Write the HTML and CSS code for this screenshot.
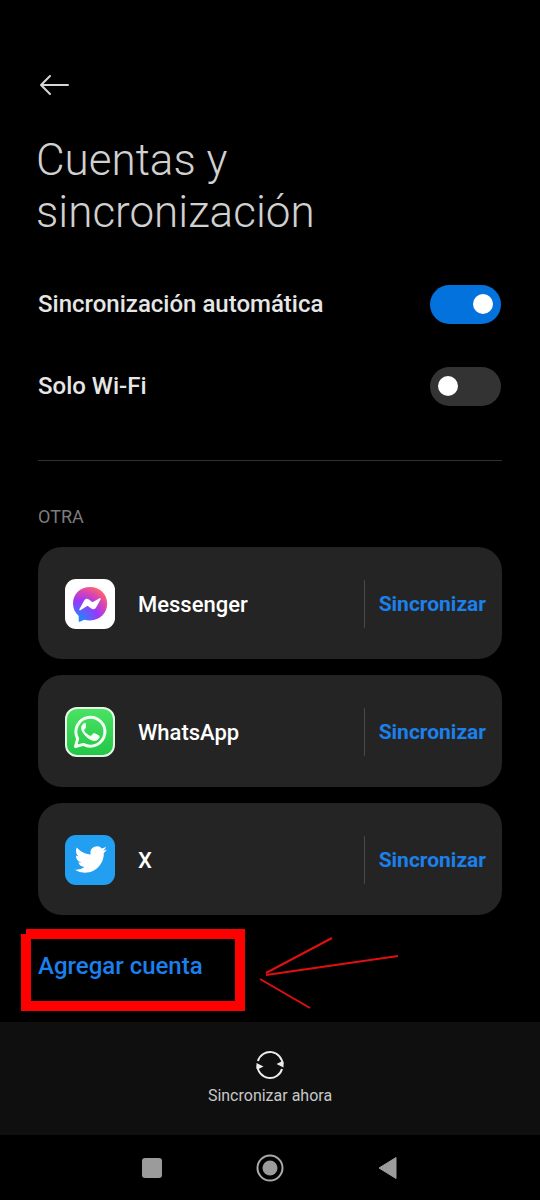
FILE: index.html
```html
<!DOCTYPE html>
<html lang="es">
<head>
<meta charset="utf-8">
<meta name="viewport" content="width=device-width, initial-scale=1">
<title>Cuentas y sincronización</title>
<link rel="stylesheet" href="styles.css">
</head>
<body>
<div class="screen">
  <header class="header">
    <button class="back" type="button" aria-label="Atrás">
      <svg width="32" height="24" viewBox="0 0 32 24" fill="none" stroke="#d6d6d6" stroke-width="2" stroke-linecap="round" stroke-linejoin="round"><path d="M30 12H3M12 3L3 12l9 9"/></svg>
    </button>
    <h1 class="title">Cuentas y sincronización</h1>
  </header>
  <main class="content">
    <section class="settings">
      <div class="setting">
        <label for="auto">Sincronización automática</label>
        <input class="switch" id="auto" type="checkbox" role="switch" checked>
      </div>
      <div class="setting">
        <label for="wifi">Solo Wi-Fi</label>
        <input class="switch" id="wifi" type="checkbox" role="switch">
      </div>
    </section>
    <section class="accounts">
      <h2 class="group">OTRA</h2>
      <ul class="list">
        <li class="card">
          <svg class="logo" viewBox="0 0 50 50" aria-hidden="true">
            <defs><radialGradient id="msg" cx="0.15" cy="1" r="1.1"><stop offset="0" stop-color="#0a95ff"/><stop offset="0.55" stop-color="#9a37f8"/><stop offset="0.8" stop-color="#d745b4"/><stop offset="1" stop-color="#ff6270"/></radialGradient></defs>
            <rect width="50" height="50" rx="11" fill="#fff"/>
            <path fill="url(#msg)" d="M25 8C15 8 8 15.200 8 24.600c0 5.100 2.100 9.300 5.700 12.300V42c0 .8.600 1 1.200.8l4.300-2.100c1.800.5 3.800.7 5.800.7 10 0 17.200-7.200 17.200-16.800C42.200 15.200 35 8 25 8z"/>
            <path fill="#fff" stroke="#fff" stroke-width="1.500" stroke-linejoin="round" d="M15 30.500l5-8.800c.8-1.200 2.200-1.500 3.400-.7l4 3.100 7.600-4.300-4.700 8.500c-.8 1.300-2.400 1.600-3.600.7l-4.200-3.200z"/>
          </svg>
          <span class="name">Messenger</span>
          <button class="sync" type="button">Sincronizar</button>
        </li>
        <li class="card">
          <svg class="logo" viewBox="0 0 50 50" aria-hidden="true">
            <defs><linearGradient id="wa" x2="0" y2="1"><stop offset="0" stop-color="#4be364"/><stop offset="1" stop-color="#22c646"/></linearGradient></defs>
            <rect x="1" y="1" width="48" height="48" rx="11" fill="url(#wa)" stroke="#e4f8e5" stroke-width="2"/>
            <path fill="none" stroke="#f3fff4" stroke-width="3" stroke-linejoin="round" d="M10.500 39.500l2.200-7.800A14.500 14.500 0 1 1 18.400 37.400z"/>
            <path fill="#f3fff4" stroke="#f3fff4" d="M20.400 16.500c-.6-.2-1.700 0-2.500 1-2.100 2.500-1.500 5.600.9 8.900 2.900 4 6.100 6.300 9.900 7 2.100.4 4.500-.8 5.100-2.400.4-1 .4-1.900.1-2.200l-4.500-2.200c-.5-.2-.9 0-1.200.4l-1.700 2c-.3.400-.7.500-1.200.3-3.200-1.300-5.400-3.500-6.500-5.600-.3-.5-.1-.8.2-1.100l1.300-1.700c.2-.3.200-.6.100-1z"/>
          </svg>
          <span class="name">WhatsApp</span>
          <button class="sync" type="button">Sincronizar</button>
        </li>
        <li class="card">
          <svg class="logo" viewBox="0 0 50 50" aria-hidden="true">
            <rect width="50" height="50" rx="11" fill="#229ff1"/>
            <path fill="#fff" transform="translate(9.700 8.300) scale(1.350)" d="M23.950 4.570a10 10 0 0 1-2.820.77 4.960 4.960 0 0 0 2.160-2.720c-.95.550-2 .95-3.130 1.180a4.920 4.920 0 0 0-8.380 4.480C7.690 8.090 4.070 6.130 1.640 3.160a4.820 4.820 0 0 0-.67 2.480c0 1.710.87 3.210 2.190 4.100a4.900 4.900 0 0 1-2.230-.62v.06a4.920 4.920 0 0 0 3.950 4.830 5 5 0 0 1-2.210.08 4.940 4.940 0 0 0 4.600 3.420A9.870 9.870 0 0 1 0 19.540a14 14 0 0 0 7.550 2.210c9.050 0 14-7.500 14-13.980 0-.21 0-.42-.02-.63a9.940 9.940 0 0 0 2.460-2.550z"/>
          </svg>
          <span class="name">X</span>
          <button class="sync" type="button">Sincronizar</button>
        </li>
      </ul>
    </section>
    <section class="add-area">
      <button class="add" type="button">Agregar cuenta</button>
      <svg class="marks" width="400" height="100" viewBox="0 0 400 100" fill="none" aria-hidden="true">
        <path fill="#f00" fill-rule="evenodd" d="M26 14H245V96H21V19h5zM31 24V86H235V24z"/>
        <path stroke="#e01010" stroke-width="2" d="M332 23L266 58M398 41L266 60M260 64L310 93"/>
      </svg>
    </section>
  </main>
  <footer class="toolbar">
    <button class="sync-now" type="button">
      <svg width="30" height="30" viewBox="0 0 30 30" aria-hidden="true"><g fill="none" stroke="#ececec" stroke-width="2"><path d="M3 11A12.500 12.500 0 0 1 27.500 14.500M27 19A12.500 12.500 0 0 1 2.500 15.500"/></g><path fill="#ececec" d="M21.500 14l5-2.500 2 0v6zM8.500 16.500l-5 2.500-2 0v-6z"/></svg>
      <span>Sincronizar ahora</span>
    </button>
  </footer>
  <nav class="navbar" aria-label="Sistema">
    <button type="button" aria-label="Recientes"><svg width="30" height="30" viewBox="0 0 30 30"><rect x="5" y="5" width="20" height="20" rx="3" fill="#9b9b9b"/></svg></button>
    <button type="button" aria-label="Inicio"><svg width="30" height="30" viewBox="0 0 30 30"><circle cx="15" cy="15" r="12.500" fill="none" stroke="#aaa" stroke-width="2"/><circle cx="15" cy="15" r="7.500" fill="#9b9b9b"/></svg></button>
    <button type="button" aria-label="Volver"><svg width="30" height="30" viewBox="0 0 30 30"><path d="M6 15L23 4.500v21z" fill="#9b9b9b" stroke="#9b9b9b" stroke-linejoin="round"/></svg></button>
  </nav>
</div>
</body>
</html>
```
FILE: styles.css
```css
* { box-sizing: border-box; }

body {
  margin: 0;
  background: #000;
  color: #e6e6e6;
  font-family: Roboto, "Liberation Sans", sans-serif;
}

button {
  padding: 0;
  border: 0;
  background: none;
  color: inherit;
  font: inherit;
  cursor: pointer;
}

svg { display: block; }

.screen {
  display: flex;
  flex-direction: column;
  min-height: 100vh;
}

.header { padding: 73px 36px 0; }

.back {
  display: block;
  padding: 0 2px;
}

.title {
  max-width: 320px;
  margin: 37px 0 0;
  color: #d0d0d0;
  font-size: 44px;
  font-weight: 300;
  line-height: 52px;
}

.content {
  flex: 1;
  padding: 25px 38px 0;
}

.settings {
  padding-bottom: 33px;
  border-bottom: 1px solid #303030;
}

.setting {
  display: flex;
  align-items: center;
  justify-content: space-between;
  height: 82px;
  padding-right: 1px;
  font-size: 24px;
  font-weight: 500;
}

.switch {
  display: flex;
  align-items: center;
  width: 71px;
  height: 39px;
  margin: 0;
  padding: 0 8px;
  border-radius: 20px;
  background: #333;
  appearance: none;
}

.switch::before {
  width: 20px;
  height: 20px;
  border-radius: 50%;
  background: #fff;
  content: "";
}

.switch:checked {
  justify-content: flex-end;
  background: #0472dc;
}

.group {
  margin: 0;
  padding: 44px 0 18px;
  color: #7c7c7c;
  font-size: 18px;
  font-weight: 400;
  line-height: 24px;
}

.list {
  display: grid;
  gap: 16px;
  margin: 0;
  padding: 0;
  list-style: none;
}

.card {
  display: flex;
  align-items: center;
  height: 112px;
  padding: 2px 16px 0 27px;
  border-radius: 24px;
  background: #242424;
}

.logo {
  width: 50px;
  height: 50px;
}

.name {
  flex: 1;
  margin-left: 23px;
  color: #fff;
  font-size: 22px;
  font-weight: 500;
}

.sync {
  height: 48px;
  padding-left: 14px;
  border-left: 1px solid #4a4a4a;
  color: #1c80ea;
  font-size: 21px;
  font-weight: 700;
}

.add-area {
  position: relative;
  height: 107px;
  padding-top: 36px;
}

.add {
  color: #1b80ee;
  font-size: 24px;
  font-weight: 500;
  line-height: 30px;
}

.marks {
  position: absolute;
  top: 0;
  left: -38px;
  pointer-events: none;
}

.toolbar {
  display: flex;
  justify-content: center;
  align-items: center;
  height: 113px;
  background: #0f0f0f;
}

.sync-now {
  display: grid;
  justify-items: center;
  gap: 5px;
  color: #c8c8c8;
  font-size: 16px;
  line-height: 22px;
}

.navbar {
  display: flex;
  justify-content: center;
  align-items: center;
  gap: 88px;
  height: 65px;
}
```
